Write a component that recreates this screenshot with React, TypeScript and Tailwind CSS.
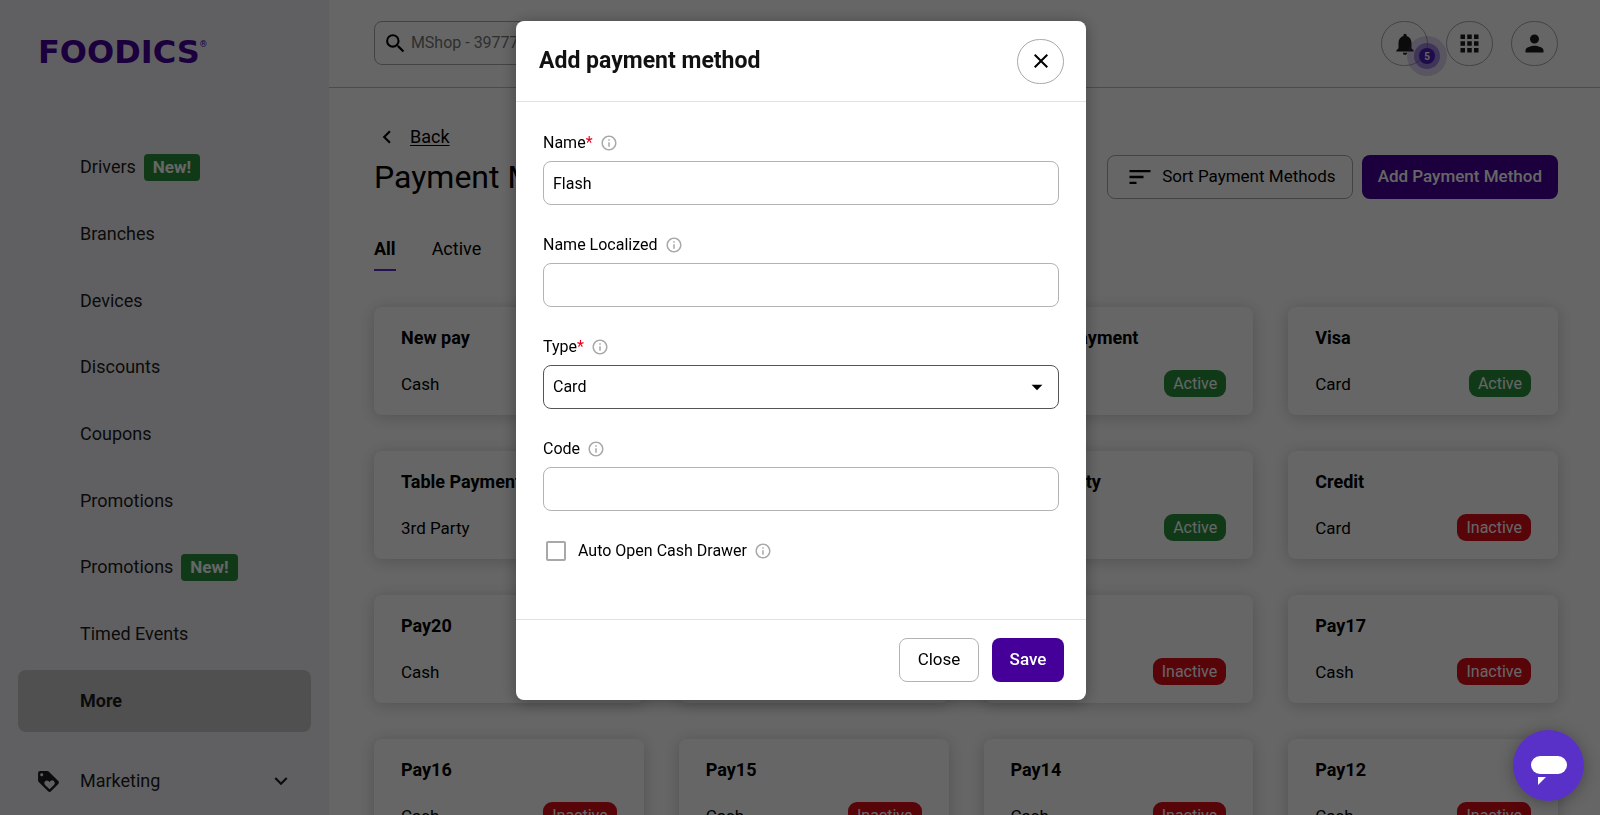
import { useState } from "react";
import {
  MdApps,
  MdArrowDropDown,
  MdClose,
  MdInfoOutline,
  MdKeyboardArrowDown,
  MdKeyboardArrowLeft,
  MdLoyalty,
  MdNotifications,
  MdPerson,
  MdSearch,
  MdSort,
} from "react-icons/md";

interface NavItem {
  label: string;
  isNew?: boolean;
  active?: boolean;
}

interface PaymentMethod {
  name: string;
  type: string;
  active: boolean;
}

const NAV_ITEMS: NavItem[] = [
  { label: "Drivers", isNew: true },
  { label: "Branches" },
  { label: "Devices" },
  { label: "Discounts" },
  { label: "Coupons" },
  { label: "Promotions" },
  { label: "Promotions", isNew: true },
  { label: "Timed Events" },
  { label: "More", active: true },
];

const METHODS: PaymentMethod[] = [
  { name: "New pay", type: "Cash", active: true },
  { name: "Mada", type: "Card", active: true },
  { name: "Online Payment", type: "Card", active: true },
  { name: "Visa", type: "Card", active: true },
  { name: "Table Payment", type: "3rd Party", active: true },
  { name: "Wallet", type: "Card", active: true },
  { name: "Third Party", type: "Card", active: true },
  { name: "Credit", type: "Card", active: false },
  { name: "Pay20", type: "Cash", active: false },
  { name: "Pay19", type: "Cash", active: false },
  { name: "Pay18", type: "Cash", active: false },
  { name: "Pay17", type: "Cash", active: false },
  { name: "Pay16", type: "Cash", active: false },
  { name: "Pay15", type: "Cash", active: false },
  { name: "Pay14", type: "Cash", active: false },
  { name: "Pay12", type: "Cash", active: false },
];

const ROUND_BUTTON =
  "relative flex h-[45px] w-[47px] items-center justify-center rounded-full border border-[#a8a8a8]";
const FIELD = "h-11 w-full rounded-lg border bg-white px-[9px] text-base text-black outline-none";

function Sidebar() {
  return (
    <aside className="flex w-[329px] shrink-0 flex-col bg-[#f1f1f5] text-[#1c1c1c]">
      <div className="flex h-[134px] shrink-0 items-start pt-[34px] pl-[38px] text-[#440099]">
        <span className="font-['DejaVu_Sans'] text-[32px] leading-9 font-bold">FOODICS</span>
        <span className="pt-1 text-[9px] leading-3">®</span>
      </div>
      <nav className="grid h-[600px] shrink-0 auto-rows-fr px-[18px]">
        {NAV_ITEMS.map((item, i) => (
          <div key={i} className="flex items-center">
            <a
              href="#"
              className={`flex h-[62px] w-full items-center gap-2 rounded-lg pl-[62px] text-lg ${
                item.active ? "bg-[#c8c8c8] font-bold" : ""
              }`}
            >
              {item.label}
              {item.isNew && (
                <span className="rounded bg-[#29903d] px-[9px] text-[17px] leading-[27px] font-bold text-white">
                  New!
                </span>
              )}
            </a>
          </div>
        ))}
      </nav>
      <button className="flex h-[94px] shrink-0 items-center pr-[35px] pl-9 text-lg">
        <MdLoyalty size={25} />
        <span className="flex-1 pl-[19px] text-left">Marketing</span>
        <MdKeyboardArrowDown size={26} />
      </button>
    </aside>
  );
}

function Header() {
  return (
    <header className="flex h-[88px] shrink-0 items-start justify-between border-b border-[#bdbdbd] pt-[21px] pr-[42px] pl-[45px]">
      <label className="flex h-11 w-[328px] items-center rounded-lg border border-[#a8a8a8] pl-2">
        <MdSearch size={27} />
        <input
          type="search"
          aria-label="Search"
          placeholder="MShop - 397772"
          className="w-full pl-[3px] text-base outline-none placeholder:text-[#767676]"
        />
      </label>
      <div className="flex gap-[18px] text-[#1c1c1c]">
        <button aria-label="Notifications" className={ROUND_BUTTON}>
          <MdNotifications size={26} />
          <span className="absolute top-[14px] left-[25px] flex size-10 items-center justify-center rounded-full bg-[#5a31c8]/20">
            <span className="flex size-[26px] items-center justify-center rounded-full bg-[#5a31c8]/50">
              <span className="flex size-4 items-center justify-center rounded-full bg-[#4c1db8] text-[10px] font-bold text-white">
                5
              </span>
            </span>
          </span>
        </button>
        <button aria-label="Apps" className={ROUND_BUTTON}>
          <MdApps size={27} />
        </button>
        <button aria-label="Account" className={ROUND_BUTTON}>
          <MdPerson size={27} />
        </button>
      </div>
    </header>
  );
}

function MethodCard({ method }: { method: PaymentMethod }) {
  return (
    <article className="h-[108px] rounded-lg bg-white px-[27px] pt-[19px] shadow-[0_2px_16px_rgba(0,0,0,0.2)]">
      <h2 className="text-lg leading-6 font-bold">{method.name}</h2>
      <div className="flex items-center justify-between pt-5">
        <span className="text-[17px] leading-6">{method.type}</span>
        <span
          className={`rounded-[9px] px-[9px] text-base leading-[27px] text-white ${
            method.active ? "bg-[#29903d]" : "bg-[#dc0d1b]"
          }`}
        >
          {method.active ? "Active" : "Inactive"}
        </span>
      </div>
    </article>
  );
}

function InfoLabel({ htmlFor, text, required }: { htmlFor: string; text: string; required?: boolean }) {
  return (
    <label htmlFor={htmlFor} className="flex items-center text-base leading-5">
      {text}
      {required && <span className="text-[#e5001b]">*</span>}
      <MdInfoOutline size={18} className="ml-[7px] text-[#a8a8a8]" />
    </label>
  );
}

function AddMethodDialog() {
  const [name, setName] = useState("Flash");
  const [type, setType] = useState("Card");

  return (
    <form
      role="dialog"
      aria-label="Add payment method"
      className="w-[570px] rounded-lg bg-white shadow-[0_2px_16px_rgba(0,0,0,0.35)]"
    >
      <div className="flex h-[81px] items-center justify-between border-b border-[#dfe1ee] pr-[22px] pl-[23px]">
        <h2 className="text-[23px] font-bold text-[#111]">Add payment method</h2>
        <button type="button" aria-label="Dismiss" className={ROUND_BUTTON}>
          <MdClose size={24} />
        </button>
      </div>
      <div className="flex h-[517px] flex-col gap-[30px] px-[27px] pt-[31px]">
        <div className="flex flex-col gap-2">
          <InfoLabel htmlFor="name" text="Name" required />
          <input
            id="name"
            value={name}
            onChange={(e) => setName(e.target.value)}
            className={`${FIELD} border-[#b3b3b3]`}
          />
        </div>
        <div className="flex flex-col gap-2">
          <InfoLabel htmlFor="name-localized" text="Name Localized" />
          <input id="name-localized" className={`${FIELD} border-[#b3b3b3]`} />
        </div>
        <div className="flex flex-col gap-2">
          <InfoLabel htmlFor="type" text="Type" required />
          <div className="relative">
            <select
              id="type"
              value={type}
              onChange={(e) => setType(e.target.value)}
              className={`${FIELD} appearance-none border-[#555]`}
            >
              <option>Card</option>
              <option>Cash</option>
            </select>
            <MdArrowDropDown size={26} className="pointer-events-none absolute top-[9px] right-[9px]" />
          </div>
        </div>
        <div className="flex flex-col gap-2">
          <InfoLabel htmlFor="code" text="Code" />
          <input id="code" className={`${FIELD} border-[#b3b3b3]`} />
        </div>
        <div className="flex items-center gap-3 pl-[3px]">
          <input
            id="auto-open"
            type="checkbox"
            className="size-5 appearance-none rounded-[2px] border-2 border-[#a8a8a8] checked:bg-[#440099]"
          />
          <InfoLabel htmlFor="auto-open" text="Auto Open Cash Drawer" />
        </div>
      </div>
      <div className="flex h-[81px] items-center justify-end gap-[13px] border-t border-[#dfe1ee] pr-[22px]">
        <button type="button" className="h-11 w-20 rounded-lg border border-[#b3b3b3] text-[17px]">
          Close
        </button>
        <button type="submit" className="h-11 w-[72px] rounded-lg bg-[#440099] text-[17px] font-medium text-white">
          Save
        </button>
      </div>
    </form>
  );
}

export default function App() {
  return (
    <div className="flex h-screen overflow-hidden bg-white font-[Roboto,'Noto_Sans',sans-serif] text-black">
      <Sidebar />
      <div className="flex min-w-0 flex-1 flex-col">
        <Header />
        <main className="pt-[35px] pr-[42px] pl-[45px]">
          <div className="flex items-end justify-between">
            <div>
              <a href="#" className="flex items-center text-lg leading-7">
                <MdKeyboardArrowLeft size={26} />
                <span className="pl-[10px] underline underline-offset-2">Back</span>
              </a>
              <h1 className="pt-1 text-[32px] leading-[44px]">Payment Methods</h1>
            </div>
            <div className="flex gap-[9px]">
              <button className="flex h-11 items-center gap-2 rounded-lg border border-[#a8a8a8] pr-4 pl-[18px] text-[17px]">
                <MdSort size={28} />
                Sort Payment Methods
              </button>
              <button className="h-11 rounded-lg bg-[#440099] px-4 text-[17px] font-medium text-white">
                Add Payment Method
              </button>
            </div>
          </div>
          <div className="flex gap-9 pt-[34px] text-lg leading-8">
            <button className="border-b-2 border-[#5a31c8] pb-1 font-bold">All</button>
            <button className="border-b-2 border-transparent pb-1">Active</button>
          </div>
          <section className="grid grid-cols-4 gap-x-[35px] gap-y-9 pt-9">
            {METHODS.map((method) => (
              <MethodCard key={method.name} method={method} />
            ))}
          </section>
        </main>
      </div>

      <div className="fixed inset-0 flex items-start justify-center bg-black/60 pt-[21px] pl-0.5">
        <AddMethodDialog />
      </div>

      <button
        aria-label="Chat"
        className="fixed right-4 bottom-[14px] flex size-[71px] items-center justify-center rounded-full bg-[#5a31c8] shadow-[0_2px_16px_rgba(0,0,0,0.3)]"
      >
        <svg width="36" height="38" viewBox="0 0 36 38" fill="#fff">
          <rect width="36" height="18" rx="9" y="9" />
          <path d="M7 30h8l-8 8z" />
        </svg>
      </button>
    </div>
  );
}
